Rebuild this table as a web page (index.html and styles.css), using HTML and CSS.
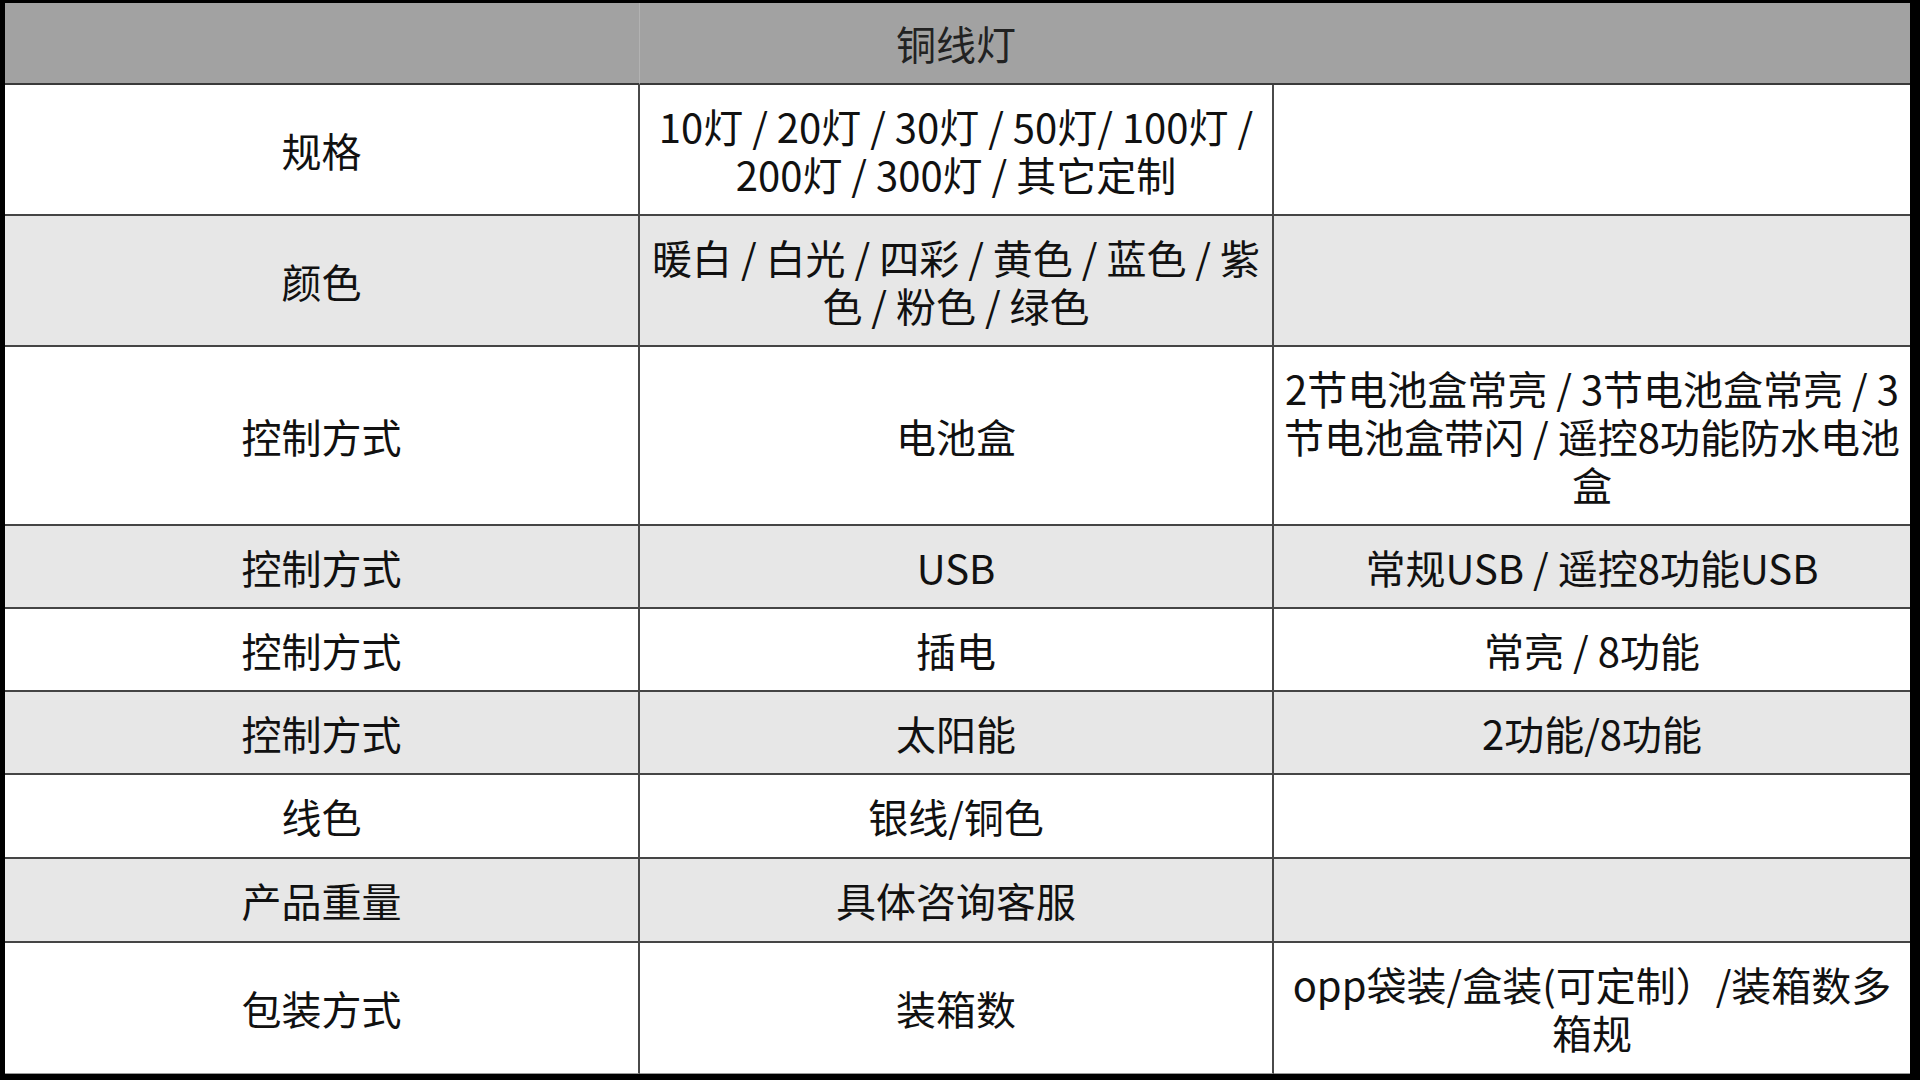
FILE: index.html
```html
<!DOCTYPE html>
<html lang="zh-CN">
<head>
<meta charset="utf-8">
<title>铜线灯</title>
<link rel="stylesheet" href="styles.css">
</head>
<body>
<div class="sheet">
  <div class="cell head c1"></div>
  <div class="cell head c2">铜线灯</div>
  <div class="cell head c3"></div>

  <div class="cell c1">规格</div>
  <div class="cell c2">10灯 / 20灯 / 30灯 / 50灯/ 100灯 /<br>200灯 / 300灯 / 其它定制</div>
  <div class="cell c3"></div>

  <div class="cell alt c1">颜色</div>
  <div class="cell alt c2">暖白 / 白光 / 四彩 / 黄色 / 蓝色 / 紫<br>色 / 粉色 / 绿色</div>
  <div class="cell alt c3"></div>

  <div class="cell c1">控制方式</div>
  <div class="cell c2">电池盒</div>
  <div class="cell c3">2节电池盒常亮 / 3节电池盒常亮 / 3<br>节电池盒带闪 / 遥控8功能防水电池<br>盒</div>

  <div class="cell alt c1">控制方式</div>
  <div class="cell alt c2">USB</div>
  <div class="cell alt c3">常规USB / 遥控8功能USB</div>

  <div class="cell c1">控制方式</div>
  <div class="cell c2">插电</div>
  <div class="cell c3">常亮 / 8功能</div>

  <div class="cell alt c1">控制方式</div>
  <div class="cell alt c2">太阳能</div>
  <div class="cell alt c3">2功能/8功能</div>

  <div class="cell c1">线色</div>
  <div class="cell c2">银线/铜色</div>
  <div class="cell c3"></div>

  <div class="cell alt c1">产品重量</div>
  <div class="cell alt c2">具体咨询客服</div>
  <div class="cell alt c3"></div>

  <div class="cell last c1">包装方式</div>
  <div class="cell last c2">装箱数</div>
  <div class="cell last c3">opp袋装/盒装(可定制）/装箱数多<br>箱规</div>
</div>
</body>
</html>
```

FILE: styles.css
```css
html, body {
  margin: 0;
  padding: 0;
  background: #000;
}

body {
  width: 1920px;
  height: 1080px;
  overflow: hidden;
  font-family: "Noto Sans CJK SC", "Noto Sans", sans-serif;
}

.sheet {
  display: grid;
  grid-template-columns: 635px 634px 636px;
  grid-template-rows: 82px 131px 131px 179px 83px 83px 83px 84px 84px 131px;
  margin: 3px 10px 6px 5px;
  background: #fff;
}

.cell {
  box-sizing: border-box;
  display: flex;
  align-items: center;
  justify-content: center;
  text-align: center;
  white-space: nowrap;
  font-size: 40px;
  line-height: 48px;
  color: #111;
  background: #fff;
  border-bottom: 2px solid #454545;
  padding: 0 8px;
}

.cell.c1,
.cell.c2 {
  border-right: 2px solid #4a4a4a;
}

.cell.alt {
  background: #e7e7e7;
}

.cell.head {
  background: #a2a2a2;
  color: #222;
  border-bottom: 2px solid #3a3a3a;
}

.cell.head.c1 {
  border-right: 1px solid #b2b2b2;
}

.cell.head.c2 {
  border-right: none;
  padding-right: 10px;
}

.cell.last {
  border-bottom: 1px solid #9a9a9a;
}
```
